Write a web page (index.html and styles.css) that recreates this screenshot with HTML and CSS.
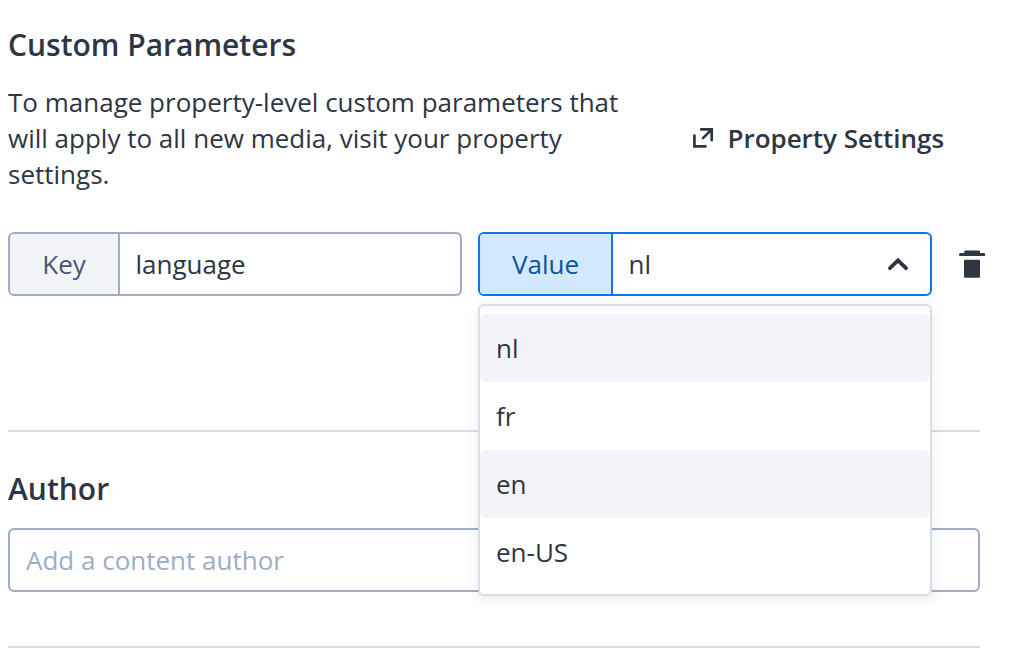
FILE: index.html
```html
<!DOCTYPE html>
<html lang="en">
<head>
<meta charset="utf-8">
<title>Custom Parameters</title>
<link rel="stylesheet" href="styles.css">
</head>
<body>
<main class="page">
  <section class="parameters">
    <h2 class="title">Custom Parameters</h2>
    <div class="intro">
      <p class="description">To manage property-level custom parameters that will apply to all new media, visit your property settings.</p>
      <a class="settings-link">
        <svg class="link-icon" width="22" height="22" viewBox="0 0 22 22" fill="none" stroke="currentColor" stroke-width="2.7" stroke-linecap="round"><path d="M2.4 8.6V19.4H13.4M9.2 2.4H19.7V13.2M19.2 2.9L11 11.1"/></svg>
        <span>Property Settings</span>
      </a>
    </div>
    <div class="fields">
      <div class="field">
        <span class="field-label">Key</span>
        <span class="field-value">language</span>
      </div>
      <div class="field field-active">
        <span class="field-label">Value</span>
        <span class="field-value">nl</span>
        <svg class="chevron" width="22" height="14" viewBox="0 0 22 14" fill="none" stroke="currentColor" stroke-width="3.8" stroke-linecap="round"><path d="M3 11.2L11 3.3L19 11.2"/></svg>
        <ul class="menu">
          <li class="option option-shaded">nl</li>
          <li class="option">fr</li>
          <li class="option option-shaded">en</li>
          <li class="option">en-US</li>
        </ul>
      </div>
      <svg class="trash" width="27" height="28" viewBox="0 0 27 28" fill="currentColor"><path d="M6.3 .4H20Q21 .4 21 1.4V3H25Q26.3 3 26.3 4.5T25 6H1.3Q0 6 0 4.5T1.3 3H5.3V1.4Q5.3 .4 6.3 .4ZM6 9.7H20Q21 9.7 21 10.7V26.7Q21 27.7 20 27.7H6Q5 27.7 5 26.7V10.7Q5 9.7 6 9.7Z"/></svg>
    </div>
  </section>
  <section class="author">
    <h2 class="title">Author</h2>
    <div class="author-input">Add a content author</div>
  </section>
</main>
</body>
</html>
```
FILE: styles.css
```css
* { box-sizing: border-box; }
body {
  margin: 0;
  background: #fff;
  color: #2e3543;
  font: 26px/36px "Open Sans", sans-serif;
}
.page { width: 980px; height: 662px; padding: 24px 0 0 8px; }
.title { margin: 0; font-size: 30px; line-height: 42px; font-weight: 600; }
.parameters { height: 408px; border-bottom: 2px solid #d9dde8; }
.intro { display: flex; align-items: center; margin-top: 18px; }
.description { width: 630px; margin: 0; }
.settings-link { display: flex; align-items: center; gap: 13.5px; margin-left: 54px; font-weight: 600; letter-spacing: -0.03px; white-space: nowrap; }
.link-icon { display: block; }
.fields { display: flex; align-items: center; gap: 16px; width: 978px; margin-top: 40px; }
.field {
  position: relative;
  display: flex;
  align-items: center;
  flex: none;
  width: 454px;
  height: 64px;
  border: 2px solid #9facc4;
  border-radius: 6px;
}
.field-label {
  flex: none;
  width: 110px;
  height: 60px;
  border-right: 2px solid #9facc4;
  border-radius: 4px 0 0 4px;
  background: #f3f4f8;
  color: #4a5578;
  line-height: 61px;
  text-align: center;
}
.field-value { flex: 1; padding-left: 15.5px; }
.field-active { border-color: #0d75e6; }
.field-active .field-label { width: 133px; border-color: #0d75e6; background: #d2e9ff; color: #0c53a3; }
.chevron { margin-right: 21px; }
.trash { flex: none; margin-left: 11px; }
.menu {
  position: absolute;
  z-index: 1;
  top: 70px;
  left: -2px;
  width: 454px;
  height: 292px;
  margin: 0;
  padding: 8px 0;
  border: 2px solid #d9dde8;
  border-radius: 6px;
  background: #fff;
  box-shadow: 0 4px 12px rgba(40, 45, 70, 0.1);
  list-style: none;
}
.option { height: 68px; padding-left: 16px; line-height: 69px; }
.option-shaded { border-radius: 6px; background: #f3f4f8; }
.author { height: 216px; padding-top: 36px; border-bottom: 2px solid #d9dde8; }
.author-input {
  height: 64px;
  margin-top: 18px;
  padding-left: 16px;
  border: 2px solid #9facc4;
  border-radius: 6px;
  color: #9facc4;
  line-height: 61px;
}
```
